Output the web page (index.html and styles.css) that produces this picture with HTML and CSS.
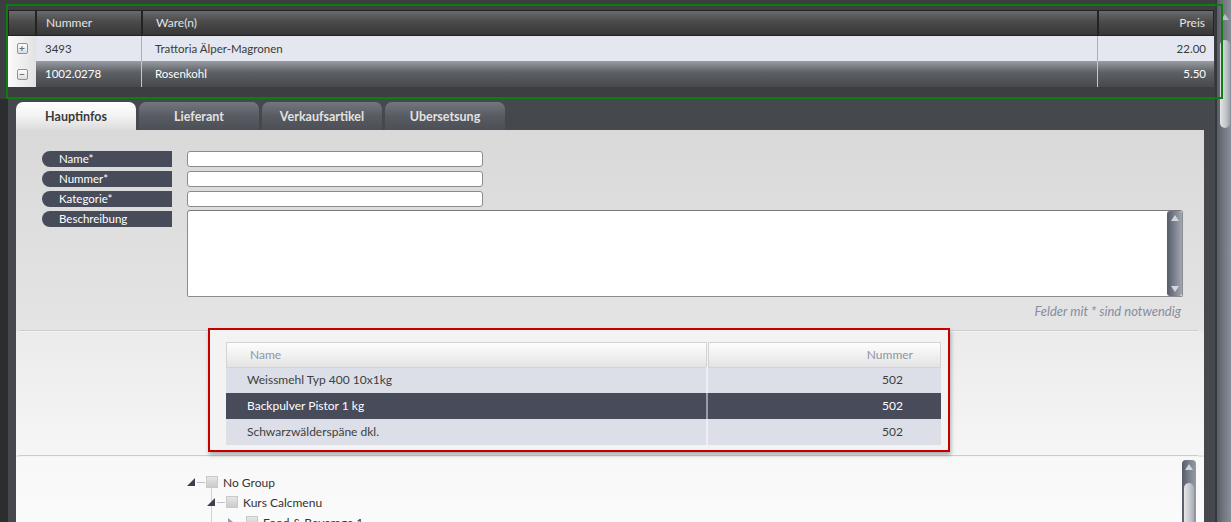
FILE: index.html
```html
<!DOCTYPE html>
<html lang="de">
<head>
    <meta charset="UTF-8">
    <meta name="viewport" content="width=device-width, initial-scale=1.0">
    <title>Ware bearbeiten</title>
    <link rel="stylesheet" href="styles.css">
</head>
<body>

    <div class="main">
        <!-- Warenliste -->
        <div class="top">
            <div class="grid-row grid-head">
                <div class="cell c0"></div>
                <div class="cell c1">Nummer</div>
                <div class="cell c2">Ware(n)</div>
                <div class="cell c3">Preis</div>
            </div>
            <div class="grid-row r-light">
                <div class="cell c0"><span class="exp-box">+</span></div>
                <div class="cell c1">3493</div>
                <div class="cell c2">Trattoria Älper-Magronen</div>
                <div class="cell c3">22.00</div>
            </div>
            <div class="grid-row r-dark">
                <div class="cell c0"><span class="exp-box">&minus;</span></div>
                <div class="cell c1">1002.0278</div>
                <div class="cell c2">Rosenkohl</div>
                <div class="cell c3">5.50</div>
            </div>
        </div>

        <div class="editor">
            <div class="tabs">
                <div class="tab active">Hauptinfos</div>
                <div class="tab">Lieferant</div>
                <div class="tab">Verkaufsartikel</div>
                <div class="tab">Ubersetsung</div>
            </div>

            <div class="panel">
                <div class="sec form-sec">
                    <div class="form">
                        <label class="lbl">Name*</label>
                        <input class="field" type="text">
                        <label class="lbl">Nummer*</label>
                        <input class="field" type="text">
                        <label class="lbl">Kategorie*</label>
                        <input class="field" type="text">
                        <label class="lbl">Beschreibung</label>
                        <div class="area">
                            <div class="area-text"></div>
                            <div class="area-scroll">
                                <span class="arr-up"></span>
                                <span class="arr-down"></span>
                            </div>
                        </div>
                    </div>
                    <p class="hint">Felder mit * sind notwendig</p>
                </div>
                <div class="rule"></div>

                <div class="sec list-sec">
                    <div class="list-box">
                        <div class="list-row list-head">
                            <div class="lc l-name">Name</div>
                            <div class="lc l-num">Nummer</div>
                        </div>
                        <div class="list-row">
                            <div class="lc l-name">Weissmehl Typ 400 10x1kg</div>
                            <div class="lc l-num">502</div>
                        </div>
                        <div class="list-row selected">
                            <div class="lc l-name">Backpulver Pistor 1 kg</div>
                            <div class="lc l-num">502</div>
                        </div>
                        <div class="list-row">
                            <div class="lc l-name">Schwarzwälderspäne dkl.</div>
                            <div class="lc l-num">502</div>
                        </div>
                    </div>
                </div>
                <div class="rule"></div>

                <div class="sec tree-sec">
                    <ul class="tree">
                        <li class="node lvl0">
                            <svg class="tw" width="8" height="8" viewBox="0 0 8 8"><polygon points="8,0 8,8 0,8" fill="#3b3f4f"/></svg>
                            <span class="dash"></span><span class="cb"></span>No Group
                        </li>
                        <li class="node lvl1">
                            <svg class="tw" width="8" height="8" viewBox="0 0 8 8"><polygon points="8,0 8,8 0,8" fill="#3b3f4f"/></svg>
                            <span class="dash"></span><span class="cb"></span>Kurs Calcmenu
                        </li>
                        <li class="node lvl2">
                            <svg class="tw" width="8" height="8" viewBox="0 0 8 8"><polygon points="1,0 6,4 1,8" fill="#9a9ea8"/></svg>
                            <span class="dash"></span><span class="cb"></span>Food &amp; Beverage 1
                        </li>
                    </ul>
                    <div class="tree-scroll">
                        <span class="arr-up"></span>
                        <span class="tree-thumb"></span>
                    </div>
                </div>
            </div>
        </div>
    </div>

    <div class="page-scroll">
        <span class="arr-up"></span>
        <span class="page-thumb"></span>
    </div>

    <div class="mark-green"></div>

</body>
</html>
```

FILE: styles.css
```css
* {
    box-sizing: border-box;
}

body {
    margin: 0;
    height: 100vh;
    overflow: hidden;
    display: flex;
    position: relative;
    background-color: #2c2d2f;
    font-family: Lato, 'Open Sans', sans-serif;
    font-size: 12px;
    color: #333;
}

.main {
    flex: 1;
    min-width: 0;
    display: flex;
    flex-direction: column;
}

/* top list */
.top {
    flex-shrink: 0;
    height: 99px;
    padding: 10px 1px 0 8px;
    background-color: #3c3e41;
}

.grid-row {
    display: grid;
    grid-template-columns: 28px 106px 956px 1fr;
}

.cell {
    white-space: nowrap;
    overflow: hidden;
}

.c1 {
    padding-left: 9px;
}

.c2 {
    padding-left: 13px;
}

.c3 {
    text-align: right;
    padding-right: 8px;
}

.grid-head {
    height: 26px;
}

.grid-head .cell {
    border: 1px solid #232323;
    background: linear-gradient(#6b6b6b, #4a4a4a 45%, #373737);
    color: #e4e4e4;
    line-height: 24px;
}

.r-light {
    height: 25px;
    line-height: 25px;
    background-color: #e4e7ef;
    color: #3a3a3a;
    font-size: 11.5px;
}

.r-dark {
    height: 26px;
    line-height: 26px;
    background: linear-gradient(#999ca2, #5c5f64 45%, #46494d);
    color: #fff;
    font-size: 11.5px;
}

.r-light .c1, .r-light .c2 {
    border-right: 1px solid #a7afba;
}

.r-dark .c1, .r-dark .c2 {
    border-right: 1px solid #c4c7cc;
}

.r-light .c0, .r-dark .c0 {
    background: linear-gradient(to right, #fbfbfb, #e2e2e2);
    display: flex;
    align-items: center;
    justify-content: center;
}

.exp-box {
    width: 11px;
    height: 11px;
    border: 1px solid #8e9196;
    border-radius: 2px;
    background: linear-gradient(#ffffff, #dcdcdc);
    color: #6a6d72;
    font-size: 10px;
    line-height: 8px;
    text-align: center;
    font-weight: bold;
}

/* editor */
.editor {
    flex: 1;
    min-height: 0;
    margin-left: 8px;
    padding: 3px 11px 0 8px;
    background-color: #45494d;
    display: flex;
    flex-direction: column;
}

.tabs {
    flex-shrink: 0;
    display: flex;
    gap: 3px;
    height: 28px;
}

.tab {
    width: 120px;
    border-radius: 7px 7px 0 0;
    text-align: center;
    line-height: 29px;
    font-weight: bold;
    font-size: 12.5px;
    color: #e2e2e2;
    background: linear-gradient(#74777d, #585b61 50%, #4c4f55);
}

.tab.active {
    color: #3a3a3a;
    background: linear-gradient(#ffffff, #f3f3f3 50%, #dcdcdc);
}

.panel {
    flex: 1;
    min-height: 0;
    display: flex;
    flex-direction: column;
    background-color: #e6e6e6;
}

.sec, .rule {
    flex-shrink: 0;
}

.rule {
    height: 2px;
    margin: 0 6px 0 3px;
    background-color: #c9cdd3;
    border-bottom: 1px solid #f4f4f4;
}

.form-sec {
    height: 200px;
    padding: 21px 21px 0 26px;
    background: linear-gradient(#d9d9d9, #e4e4e4);
}

.form {
    display: grid;
    grid-template-columns: 130px 1fr;
    column-gap: 15px;
    row-gap: 4px;
}

.lbl {
    height: 16px;
    line-height: 16px;
    padding-left: 17px;
    border-radius: 8px 0 0 8px;
    background-color: #474b5a;
    color: #fff;
    font-size: 11.5px;
}

.field {
    width: 296px;
    height: 16px;
    margin: 0;
    border: 1px solid #8c8c8c;
    border-radius: 3px;
    background-color: #fff;
    outline: none;
}

.area {
    height: 87px;
    margin-top: -1px;
    display: flex;
    border: 1px solid #8c8c8c;
    border-top-color: #7a7a7a;
    border-radius: 3px 3px 2px 2px;
    background-color: #fff;
}

.area-text {
    flex: 1;
}

.area-scroll {
    width: 15px;
    display: flex;
    flex-direction: column;
    justify-content: space-between;
    align-items: center;
    padding: 4px 0;
    border-radius: 3px;
    background: linear-gradient(to right, #555b68, #7b818e 50%, #a0a6b2);
}

.arr-up {
    width: 0;
    height: 0;
    border-left: 4px solid transparent;
    border-right: 4px solid transparent;
    border-bottom: 6px solid #d2d5da;
}

.arr-down {
    width: 0;
    height: 0;
    border-left: 4px solid transparent;
    border-right: 4px solid transparent;
    border-top: 6px solid #d2d5da;
}

.hint {
    margin: 7px 2px 0 0;
    text-align: right;
    font-style: italic;
    font-size: 13px;
    line-height: 15px;
    color: #878ca0;
}

/* article list */
.list-sec {
    height: 123px;
    padding-left: 192px;
    background: linear-gradient(#ebebeb, #f6f6f6);
}

.list-box {
    width: 742px;
    height: 124px;
    margin-top: -4px;
    padding: 12px 7px 0 16px;
    border: 2px solid #c20000;
    background-color: #f3f3f3;
    box-shadow: 1px 3px 4px rgba(0, 0, 0, 0.3);
    position: relative;
}

.list-row {
    display: grid;
    grid-template-columns: 482px 1fr;
    height: 26px;
    line-height: 26px;
    background-color: #dcdfe7;
    color: #3e3e3e;
}

.list-row .l-name {
    padding-left: 21px;
    border-right: 2px solid #eceef2;
}

.list-row .l-num {
    text-align: right;
    padding-right: 38px;
}

.list-head {
    height: 25px;
    line-height: 24px;
    background: none;
    color: #8e94a4;
}

.list-head .lc {
    border: 1px solid #d3d3d3;
    background: linear-gradient(#fdfdfd, #f1f1f1 50%, #e3e3e3);
}

.list-head .l-name {
    padding-left: 23px;
    border-right: 1px solid #d3d3d3;
    margin-right: 1px;
}

.list-head .l-num {
    padding-right: 27px;
}

.list-row.selected {
    background-color: #474b5a;
    color: #fff;
}

.list-row.selected .l-name {
    border-right-color: #9a9da6;
}

/* group tree */
.tree-sec {
    flex: 1 0 auto;
    display: flex;
    justify-content: space-between;
    padding: 3px 8px 0 171px;
    background: linear-gradient(#f8f8f8, #fbfbfb);
    overflow: hidden;
}

.tree {
    list-style: none;
    margin: 12px 0 0;
    padding: 0;
    position: relative;
}

.tree::before {
    content: '';
    position: absolute;
    left: 24px;
    top: 16px;
    bottom: -20px;
    border-left: 1px solid #cfd2d6;
}

.node {
    height: 20px;
    display: flex;
    align-items: center;
    white-space: nowrap;
    font-size: 12px;
    color: #333;
}

.lvl1 {
    padding-left: 20px;
}

.lvl2 {
    padding-left: 40px;
}

.tw {
    margin-right: 2px;
    position: relative;
}

.dash {
    width: 8px;
    border-top: 1px solid #bfc2c6;
    margin-right: 1px;
}

.cb {
    width: 12px;
    height: 12px;
    margin-right: 5px;
    border: 1px solid #c9c9c9;
    background: linear-gradient(#e6e6e6, #cacaca);
}

.tree-scroll {
    width: 14px;
    height: 80px;
    display: flex;
    flex-direction: column;
    align-items: center;
    padding-top: 4px;
    border-radius: 4px 4px 0 0;
    background: linear-gradient(to right, #555b67, #7a808c 50%, #959ba6);
}

.tree-thumb {
    width: 10px;
    flex: 1;
    margin-top: 13px;
    border-radius: 6px 6px 0 0;
    background: linear-gradient(to right, #e6e7e9, #c4c7cc 60%, #a7abb2);
}

/* window scrollbar */
.page-scroll {
    width: 16px;
    display: flex;
    flex-direction: column;
    align-items: center;
    padding: 14px 0 0 1px;
    border-left: 2px solid #34373b;
    background: linear-gradient(to right, #585d65, #737882 50%, #8a8f98);
}

.page-scroll .arr-up {
    border-bottom-color: #b9bdc4;
}

.page-thumb {
    width: 10px;
    height: 88px;
    margin-top: 20px;
    border-radius: 6px;
    background: linear-gradient(to right, #e3e4e6, #c1c4c9 60%, #9fa3aa);
}

/* selection highlight over the list */
.mark-green {
    position: absolute;
    left: 6px;
    top: 4px;
    width: 1217px;
    height: 95px;
    border: 2px solid #0f7c10;
    pointer-events: none;
}
```
